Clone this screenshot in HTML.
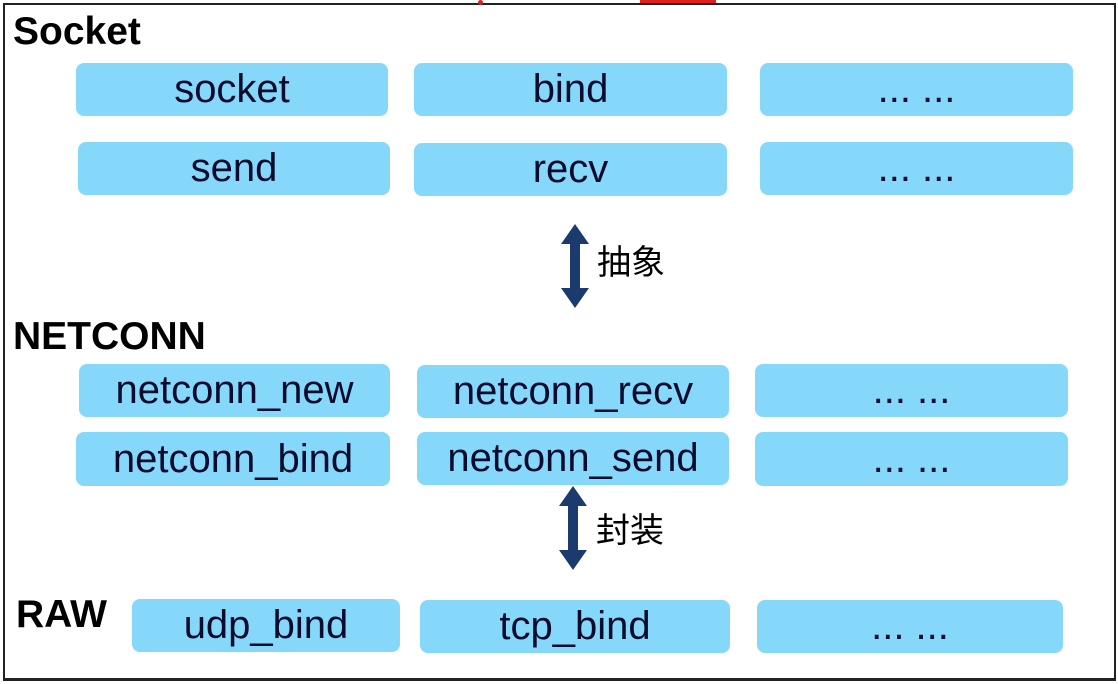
<!DOCTYPE html>
<html><head><meta charset="utf-8"><style>
body{margin:0;width:1118px;height:684px;background:#fff;position:relative;overflow:hidden;font-family:"Liberation Sans","Noto Sans CJK SC",sans-serif;}
.frame{position:absolute;left:3px;top:3px;width:1109px;height:673px;border:2px solid #222;border-bottom-width:3px;}
.b{position:absolute;background:#86d8fb;border-radius:8px;color:#0b0b2e;font-size:40px;display:flex;align-items:center;justify-content:center;}
.l{position:absolute;font-weight:bold;font-size:39px;color:#000;line-height:1;}
.t{position:absolute;font-size:34px;color:#000;line-height:1;font-family:"Noto Sans CJK SC",sans-serif;}
</style></head><body>
<div class="frame"></div>
<div style="position:absolute;left:640px;top:0;width:76px;height:3px;background:#e02020"></div>
<div style="position:absolute;left:478px;top:0;width:5px;height:5px;background:#e02020;border-radius:3px"></div>
<div class="l" style="left:13px;top:12px">Socket</div>
<div class="l" style="left:13px;top:317px">NETCONN</div>
<div class="l" style="left:16px;top:595px">RAW</div>
<div class="b" style="left:76px;top:63px;width:312px;height:53px">socket</div>
<div class="b" style="left:414px;top:63px;width:313px;height:53px">bind</div>
<div class="b" style="left:760px;top:63px;width:313px;height:53px">... ...</div>
<div class="b" style="left:78px;top:142px;width:312px;height:53px">send</div>
<div class="b" style="left:414px;top:143px;width:313px;height:53px">recv</div>
<div class="b" style="left:760px;top:142px;width:313px;height:53px">... ...</div>
<div class="b" style="left:79px;top:364px;width:311px;height:53px">netconn_new</div>
<div class="b" style="left:417px;top:365px;width:312px;height:53px">netconn_recv</div>
<div class="b" style="left:755px;top:364px;width:313px;height:53px">... ...</div>
<div class="b" style="left:76px;top:432px;width:314px;height:54px">netconn_bind</div>
<div class="b" style="left:417px;top:432px;width:312px;height:53px">netconn_send</div>
<div class="b" style="left:755px;top:432px;width:313px;height:54px">... ...</div>
<div class="b" style="left:132px;top:599px;width:268px;height:53px">udp_bind</div>
<div class="b" style="left:420px;top:600px;width:310px;height:53px">tcp_bind</div>
<div class="b" style="left:757px;top:600px;width:306px;height:53px">... ...</div>
<svg style="position:absolute;left:559px;top:224px" width="32" height="84"><polygon points="16,0 30,20 21,20 21,64 30,64 16,84 2,64 11,64 11,20 2,20" fill="#1b3a6e"/></svg>
<svg style="position:absolute;left:557px;top:486px" width="32" height="84"><polygon points="16,0 30,20 21,20 21,64 30,64 16,84 2,64 11,64 11,20 2,20" fill="#1b3a6e"/></svg>
<div class="t" style="left:597px;top:243px">抽象</div>
<div class="t" style="left:596px;top:511px">封装</div>
</body></html>
